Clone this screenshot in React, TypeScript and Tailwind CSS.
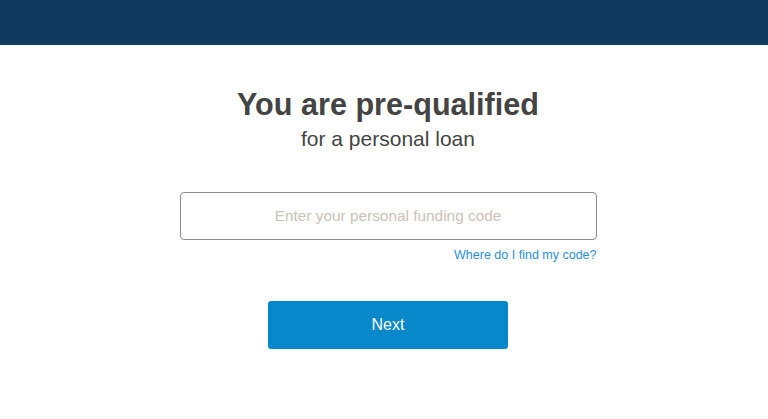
export default function App() {
  return (
    <div className="min-h-[419px] bg-white font-['Liberation_Sans',Arial,sans-serif]">
      <header className="h-[45px] bg-[#113a5f]" />
      <main className="flex flex-col items-center pl-[8px] pt-[40px]">
        <h1 className="text-[30.6px] leading-[38px] font-bold text-[#444444]">You are pre-qualified</h1>
        <p className="mt-[3px] text-[21px] leading-[26px] text-[#444444]">for a personal loan</p>
        <div className="mt-[40px] flex w-[417px] flex-col items-end">
          <input
            type="text"
            placeholder="Enter your personal funding code"
            className="h-[48px] w-full rounded-[4px] border border-[#8c8c99] bg-white text-center text-[15.4px] text-[#444] outline-none placeholder:text-[#cbc2b8]"
          />
          <a href="#" className="mt-[8px] text-[12.5px] leading-[14px] text-[#2b8fd6]">Where do I find my code?</a>
        </div>
        <button className="mt-[39px] h-[48px] w-[240px] rounded-[3px] bg-[#0788cb] text-[16px] text-white">
          Next
        </button>
      </main>
    </div>
  );
}
